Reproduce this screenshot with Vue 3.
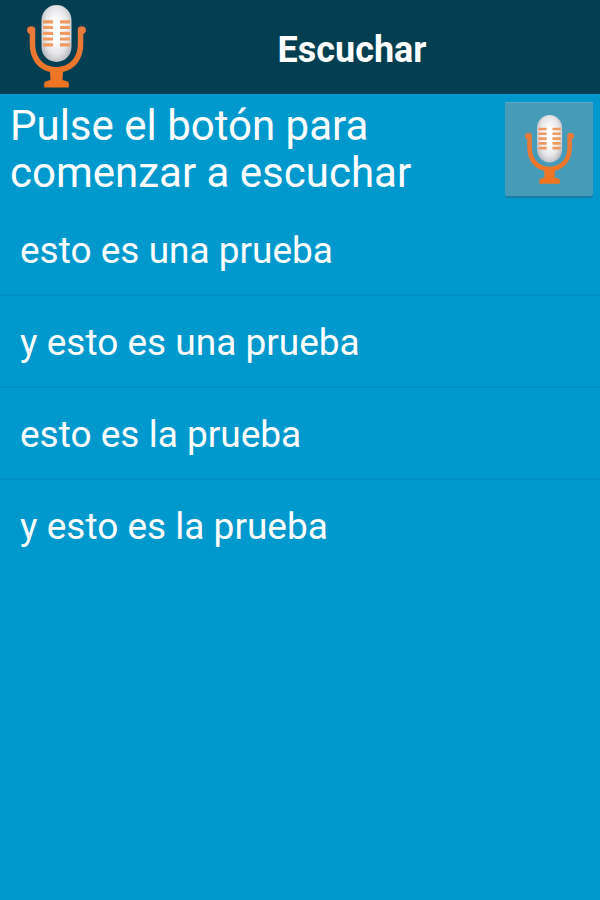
<template>
  <div class="listen-page">
    <header class="bar">
      <svg class="logo" viewBox="0 0 60 84" aria-hidden="true"><use href="#mic" /></svg>
      <h1>Escuchar</h1>
    </header>

    <main>
      <div class="prompt">
        <p>Pulse el botón para comenzar a escuchar</p>
        <button class="listen-btn" type="button" aria-label="Escuchar">
          <svg viewBox="0 0 60 84" aria-hidden="true"><use href="#mic" /></svg>
        </button>
      </div>

      <!-- Recognised phrases -->
      <ul class="results">
        <li v-for="phrase in phrases" :key="phrase">{{ phrase }}</li>
      </ul>
    </main>

    <!-- Microphone shared by the bar and the button -->
    <svg class="defs" width="0" height="0" aria-hidden="true">
      <defs>
        <linearGradient id="orange" x1="0" y1="0" x2="0" y2="1">
          <stop offset="0" stop-color="#e67a3c" />
          <stop offset="1" stop-color="#f07420" />
        </linearGradient>
        <radialGradient id="silver" cx="0.5" cy="0.45" r="0.6">
          <stop offset="0.3" stop-color="#ffffff" />
          <stop offset="0.7" stop-color="#e4e3e6" />
          <stop offset="1" stop-color="#b4b7bd" />
        </radialGradient>
        <symbol id="mic" viewBox="0 0 60 84">
          <path d="M0 24.5 C0 20.5 8 19.8 8.2 24 L8.2 39 C8.2 53 17 62 29.5 62 C42 62 50.8 53 50.8 39 L50.8 24 C51 19.8 59 20.5 59 24.5 C59 27.5 57.5 28.5 56.3 29 L56.3 39 C56.3 54.5 47.5 64.5 36 67 L35.5 75 L40 76.3 Q41.8 76.8 41.8 78.5 L41.8 82.6 L17.2 82.6 L17.2 78.5 Q17.2 76.8 19 76.3 L23.5 75 L23 67 C11.5 64.5 2.7 54.5 2.7 39 L2.7 29 C1.5 28.5 0 27.5 0 24.5 Z" fill="url(#orange)" />
          <rect x="14.5" y="0" width="30" height="57" rx="15" fill="url(#silver)" />
          <path d="M16 16.8 H26 M16 22.5 H26 M16 28.3 H26 M16 34 H26 M16 39.8 H26 M33 16.8 H43 M33 22.5 H43 M33 28.3 H43 M33 34 H43 M33 39.8 H43" stroke="#f09a62" stroke-width="3.2" />
        </symbol>
      </defs>
    </svg>
  </div>
</template>

<script setup>
import { ref } from 'vue'

const phrases = ref([
  'esto es una prueba',
  'y esto es una prueba',
  'esto es la prueba',
  'y esto es la prueba',
])
</script>

<style>
body { background:#0099ce; }
</style>

<style scoped>
.listen-page { min-height:100vh; background:#0099ce; color:#fff; font-family:Roboto, "Liberation Sans", sans-serif; }
.bar { display:flex; align-items:center; height:94px; background:#033f51; }
.logo { width:60px; height:84px; margin:0 17px 0 27px; flex:none; }
.bar h1 { flex:1; margin:0; padding-top:6px; text-align:center; font-size:36px; line-height:44px; font-weight:700; }
.prompt { display:flex; align-items:flex-start; justify-content:space-between; padding:8px 7px 8px 10px; }
.prompt p { flex:1; margin:0; max-width:440px; font-size:42px; line-height:47px; }
.listen-btn { display:flex; align-items:center; justify-content:center; width:88px; height:94px; padding:2px 0 0 2px; border:0; border-radius:2px; background:#469cb8; box-shadow:0 2px 1px #197da3, inset 0 1px 0 #58a9c2; cursor:pointer; }
.listen-btn svg { width:50px; height:70px; }
.results { list-style:none; margin:0; padding:0; }
.results li { padding:22px 20px 18px; font-size:37px; line-height:50px; border-bottom:2px solid #008fc4; }
.results li:last-child { border-bottom:0; }
.defs { position:absolute; }
</style>
